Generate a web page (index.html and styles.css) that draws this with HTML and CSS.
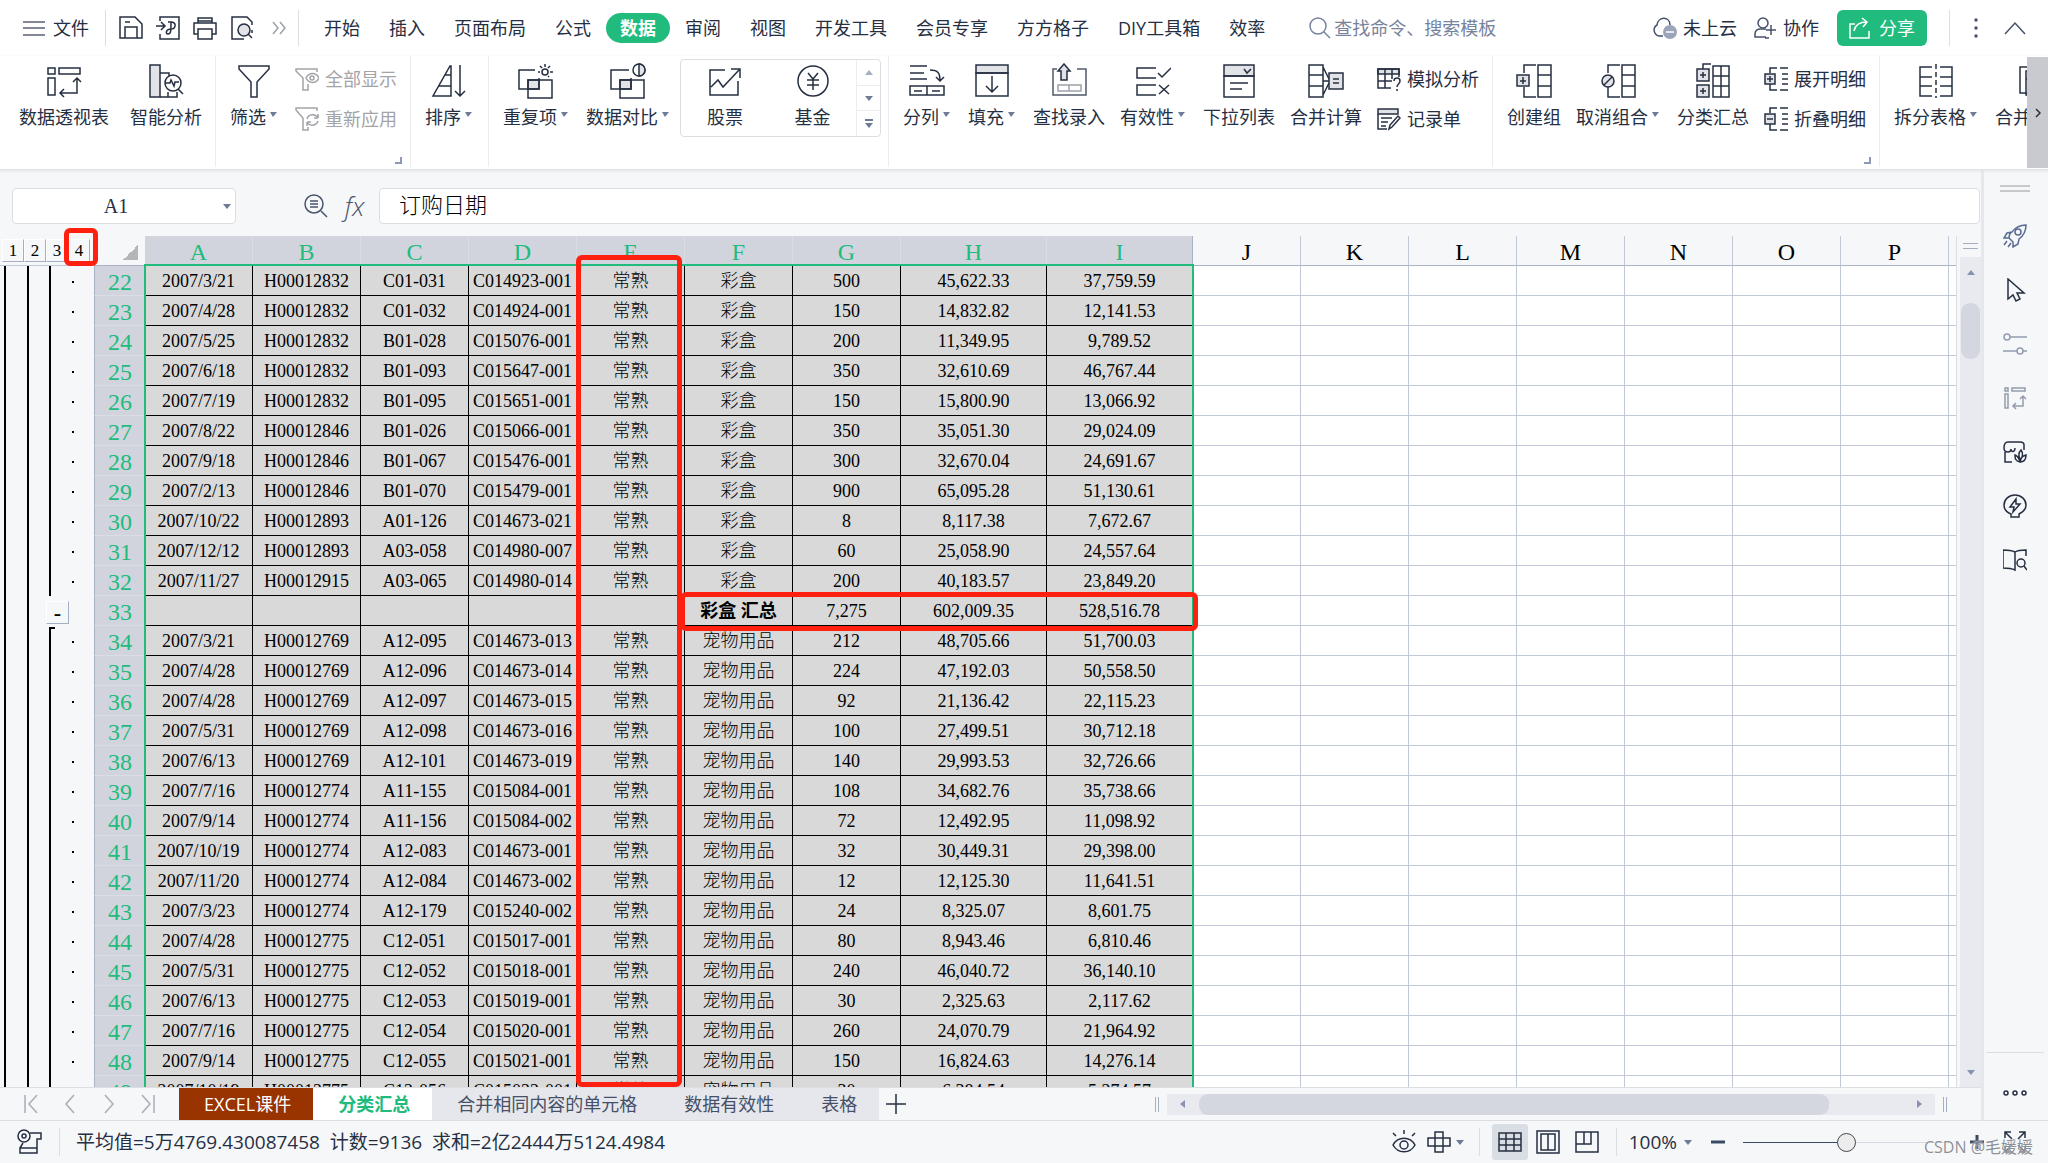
FILE: index.html
```html
<!DOCTYPE html>
<html lang="zh-CN">
<head>
<meta charset="utf-8">
<title>分类汇总</title>
<link rel="stylesheet" href="styles.css">
</head>
<body>
<header class="menubar">
  <button class="file-btn"><svg width="22" height="20" viewBox="0 0 22 20"><path d="M0 4h22M0 10h22M0 17h22"/></svg>文件</button>
  <i class="sep"></i>
  <div class="quick">
    <button aria-label="保存"><svg width="24" height="24" viewBox="0 0 24 24"><path d="M1 1h15l7 7v14H1zM6 22V11h12v11M6 6h5"/></svg></button>
    <button aria-label="输出为PDF"><svg width="24" height="24" viewBox="0 0 24 24"><path d="M4 5V1h19v22H4v-5M0 10h8M5 6l4 4-4 4M12 6h3c6 0 5 7 0 7-5 0-6 5-3 5 3 0 3-3 3-12"/></svg></button>
    <button aria-label="打印"><svg width="24" height="24" viewBox="0 0 24 24"><path d="M5 7V2h14v5M5 18H1V7h22v11h-4M5 13h14v10H5zM5 5h14"/></svg></button>
    <button aria-label="打印预览"><svg width="24" height="24" viewBox="0 0 24 24"><path d="M14 23H2V1h15l5 5v3M22 14v3"/><circle class="fill" cx="14" cy="14" r="6"/><path d="M18 18l4 4"/></svg></button>
    <button class="more" aria-label="更多"><svg width="14" height="14" viewBox="0 0 14 14"><path d="M1 1l5 6-5 6M8 1l5 6-5 6"/></svg></button>
  </div>
  <i class="sep"></i>
  <nav class="tabs">
    <button>开始</button><button>插入</button><button>页面布局</button><button>公式</button><button class="active">数据</button><button>审阅</button><button>视图</button><button>开发工具</button><button>会员专享</button><button>方方格子</button><button>DIY工具箱</button><button>效率</button>
  </nav>
  <label class="search"><svg width="22" height="22" viewBox="0 0 22 22"><circle cx="9" cy="9" r="8"/><path d="M15 15l6 6"/></svg><input type="text" aria-label="搜索" placeholder="查找命令、搜索模板"></label>
  <div class="account">
    <button class="cloud"><svg width="25" height="24" viewBox="0 0 25 24"><path d="M11 20H7a6 6 0 0 1-2-11C6 0 18 0 18 9"/><circle cx="18" cy="16" r="7" style="fill:#9aa5bb;stroke:none"/><path d="M14 16h8" style="stroke:#fff"/></svg>未上云</button>
    <button class="coop"><svg width="22" height="22" viewBox="0 0 22 22"><circle cx="9" cy="6" r="5"/><path d="M12 20H1v-3c0-4 3-5 6-5h5M17 8v10M12 13h10M15 21h-4"/></svg>协作</button>
    <button class="share"><svg width="22" height="22" viewBox="0 0 22 22"><path d="M6 7H1v14h19v-7M5 14C6 8 10 5 18 5M13 1l5 4-4 5"/></svg>分享</button>
    <i class="sep"></i>
    <button class="dots" aria-label="更多选项"><svg width="4" height="20" viewBox="0 0 4 20"><circle cx="2" cy="2" r="1"/><circle cx="2" cy="10" r="1"/><circle cx="2" cy="18" r="1"/></svg></button>
    <button aria-label="收起功能区"><svg width="22" height="14" viewBox="0 0 22 14"><path d="M1 13L11 2l10 11"/></svg></button>
  </div>
</header>

<section class="ribbon">
  <div class="group first">
    <button class="big"><svg viewBox="0 0 36 36"><path d="M2 5h7v6H2zM13 5h21v6H13zM2 15h7v17H2zM31 15v15H14M27 19l4-4 4 4M18 26l-4 4 4 4"/></svg><span>数据透视表</span></button>
    <button class="big"><svg viewBox="0 0 36 36"><path class="fill" d="M2 2h10v32H2z"/><path d="M12 10h9v3M12 34h17v-5M20 34v-5"/><circle cx="25" cy="20" r="8"/><path d="M30 26l5 5M17 20h5l1-3 3 6 1-4h4"/></svg><span>智能分析</span></button>
  </div>
  <div class="group">
    <button class="big drop"><svg viewBox="0 0 36 36"><path d="M3 3h30v3L21 19v15h-6V19L3 6z"/></svg><span>筛选</span></button>
    <div class="stack">
      <button class="small" disabled><svg viewBox="0 0 24 24"><path d="M22 5V2H1v2l7 7v12h5v-6M11 11c3-6 10-6 13 0-3 6-10 6-13 0z"/><circle cx="17" cy="11" r="2"/></svg>全部显示</button>
      <button class="small" disabled><svg viewBox="0 0 24 24"><path d="M22 4V1H1v2l7 8v12h5v-3M12 12a6 6 0 0 1 11-1v-4M23 11h-4M23 14a6 6 0 0 1-11 1v4M12 15h4"/></svg>重新应用</button>
    </div>
    <i class="corner"></i>
  </div>
  <div class="group">
    <button class="big drop"><svg viewBox="0 0 36 36"><path d="M20 3v30H2L19 3zM14 12h6M8 23h12M29 2v31M24 28l5 5 5-5"/></svg><span>排序</span></button>
  </div>
  <div class="group tight">
    <button class="big drop"><svg viewBox="0 0 36 36"><path class="fill" d="M10 17h11v9H10z"/><path d="M17 7H1v19h20V15M10 17h24v18H10zM27 1v3M20 9h2M32 9h3M22 3l2 2M32 3l-2 2M31 14l-1-1"/><circle cx="27" cy="9" r="3"/></svg><span>重复项</span></button>
    <button class="big drop"><svg viewBox="0 0 36 36"><path class="fill" d="M10 17h11v9H10z"/><path d="M19 7H1v19h20V15M10 17h24v18H10z"/><circle cx="29" cy="7" r="6"/><path class="fill" d="M29 1a6 6 0 0 1 0 12z"/></svg><span>数据对比</span></button>
    <div class="gallery">
      <button class="big"><svg viewBox="0 0 36 36"><path d="M18 7H3v25h28V18M4 24l7-7 5 7L32 7M24 6h9v9"/></svg><span>股票</span></button>
      <button class="big"><svg viewBox="0 0 36 36"><circle cx="18" cy="18" r="15"/><path d="M13 10l5 6 5-6M12 17h12M12 22h12M18 17v10"/></svg><span>基金</span></button>
      <div class="spin"><button class="up" aria-label="上一行"></button><button class="down" aria-label="下一行"></button><button class="all" aria-label="全部"></button></div>
    </div>
  </div>
  <div class="group">
    <button class="big drop"><svg viewBox="0 0 36 36"><path d="M1 3h17M1 10h14M1 16h17M21 7c8 0 10 3 10 11M27 14l4 4 4-4M1 23h34v9H1zM18 23v9M5 28h8M23 28h8"/></svg><span>分列</span></button>
    <button class="big drop"><svg viewBox="0 0 36 36"><path class="fill" d="M2 2h32v8H2z"/><path d="M2 10h32v23H2zM18 13v16M12 23l6 6 6-6"/></svg><span>填充</span></button>
    <button class="big"><svg viewBox="0 0 36 36"><g opacity=".8"><path d="M6 6H2v26h33V6h-9"/></g><g opacity=".45"><path d="M7 22h23v6H7zM18 22v6"/></g><path class="fill" d="M10 17V8H7l6-7 6 7h-3v9z"/></svg><span>查找录入</span></button>
    <button class="big drop"><svg viewBox="0 0 36 36"><path d="M21 5H2v10h19M21 22H2v10h19M23 10l4 4 9-9M24 22l10 9M34 22l-10 9"/></svg><span>有效性</span></button>
    <button class="big"><svg viewBox="0 0 36 36"><path class="fill" d="M3 2h30v11H3z"/><path d="M3 13h30v21H3zM23 6l3 4 4-4M9 20h18M9 26h12"/></svg><span>下拉列表</span></button>
    <button class="big"><svg viewBox="0 0 36 36"><path d="M1 2h14v32H1zM1 12h14M1 23h14M15 4l6 12M15 18h6M15 32l6-12"/><path class="fill" d="M21 10h14v16H21z"/><path d="M25 16h6M25 20h6"/></svg><span>合并计算</span></button>
    <div class="stack">
      <button class="small"><svg viewBox="0 0 24 24"><path class="fill" d="M1 2h21v5H1z"/><path d="M22 10V2H1v19h13M1 14h14M8 2v19M15 2v10M17 14c0-4 6-4 6 0 0 3-3 3-3 6M20 22v2"/></svg>模拟分析</button>
      <button class="small"><svg viewBox="0 0 24 24"><path class="fill" d="M1 2h20v5H1z"/><path d="M10 22H1V7M4 11h11M4 15h7M4 19h5M12 22l1-4 8-9 2 2-8 9z"/></svg>记录单</button>
    </div>
  </div>
  <div class="group">
    <button class="big"><svg viewBox="0 0 36 36"><path d="M20 2H8v8M8 24v10h12M22 2h13v32H22zM22 12h13M22 23h13"/><path class="fill" d="M1 12h12v11H1z"/><path d="M7 14v7M4 18h6"/></svg><span>创建组</span></button>
    <button class="big drop"><svg viewBox="0 0 36 36"><path d="M20 2H8v8M8 24v10h12M22 2h13v32H22zM22 12h13M22 23h13"/><circle class="fill" cx="8" cy="18" r="6"/><path d="M4 22l8-8"/></svg><span>取消组合</span></button>
    <button class="big"><svg viewBox="0 0 36 36"><path d="M8 6V1h8M18 3h16v31H18zM18 13h16M18 23h16M26 3v31"/><path class="fill" d="M2 6h12v12H2zM2 22h12v12H2z"/><path d="M8 9v6M5 12h6M8 25v6M5 28h6"/></svg><span>分类汇总</span></button>
    <div class="stack">
      <button class="small"><svg viewBox="0 0 24 24"><path d="M13 1H6v5M6 17v6h7M16 1h8M18 7h6M18 12h6M18 17h6M16 23h8"/><path class="fill" d="M1 7h10v10H1z"/><path d="M6 9v6M3 12h6"/></svg>展开明细</button>
      <button class="small"><svg viewBox="0 0 24 24"><path d="M13 1H6v5M6 17v6h7M16 1h8M18 7h6M18 12h6M18 17h6M16 23h8"/><path class="fill" d="M1 7h10v10H1z"/><path d="M3 12h6"/></svg>折叠明细</button>
    </div>
    <i class="corner"></i>
  </div>
  <div class="group last">
    <button class="big drop"><svg viewBox="0 0 36 36"><path d="M14 4H2v29h12M22 4h12v29H22M2 14h12M2 23h12M22 14h12M22 23h12"/><path d="M18 1v34" stroke-dasharray="5 3"/></svg><span>拆分表格</span></button>
    <button class="big drop"><svg viewBox="0 0 36 36"><path d="M9 4H1v26h7M7 8h22v24H7zM7 16h22M18 8v24"/></svg><span>合并表格</span></button>
  </div>
  <button class="ribbon-next" aria-label="向右滚动"><svg width="6" height="12" viewBox="0 0 6 12"><path d="M1 2l4 4-4 4"/></svg></button>
</section>

<div class="body">
  <main class="sheet">
    <div class="formula-row">
      <div class="namebox"><input type="text" aria-label="名称框" value="A1"><button aria-label="选择名称"></button></div>
      <div class="fx">
        <button aria-label="浏览公式"><svg width="26" height="26" viewBox="0 0 26 26"><circle cx="11" cy="11" r="9"/><path d="M18 18l6 6M7 8h8M7 11h8M7 14h8"/></svg></button>
        <button class="fx-btn">fx</button>
      </div>
      <input class="formula" type="text" aria-label="编辑栏" value="订购日期">
    </div>
    <div class="work">
      <div class="grid">
        <div class="outline">
          <div class="levels"><button>1</button><button>2</button><button>3</button><button>4</button></div>
          <div class="marks" id="marks"></div>
        </div>
        <table class="cells">
          <colgroup><col class="c-head"><col span="7"><col class="c-wide" span="2"><col span="12"></colgroup>
          <thead><tr id="letters"></tr></thead>
          <tbody id="rows"></tbody>
        </table>
        <div class="selection"></div>
      </div>
      <div class="vscroll">
        <i class="split"></i>
        <div class="track"><button class="up" aria-label="向上"></button><i class="thumb"></i><button class="down" aria-label="向下"></button></div>
      </div>
      <div class="note note-level"></div>
      <div class="note note-column"></div>
      <div class="note note-total"></div>
    </div>
    <div class="sheetbar">
      <div class="sheetnav">
        <button aria-label="第一个"><svg width="14" height="20" viewBox="0 0 14 20"><path d="M1 1v18M13 1L5 10l8 9"/></svg></button>
        <button aria-label="上一个"><svg width="14" height="20" viewBox="0 0 14 20"><path d="M11 1l-8 9 8 9"/></svg></button>
        <button aria-label="下一个"><svg width="14" height="20" viewBox="0 0 14 20"><path d="M3 1l8 9-8 9"/></svg></button>
        <button aria-label="最后一个"><svg width="14" height="20" viewBox="0 0 14 20"><path d="M13 1v18M1 1l8 9-8 9"/></svg></button>
      </div>
      <div class="sheettabs">
        <button class="brown">EXCEL课件</button><button class="current">分类汇总</button><button>合并相同内容的单元格</button><button>数据有效性</button><button>表格</button>
      </div>
      <button class="add" aria-label="新建工作表"><svg width="20" height="20" viewBox="0 0 20 20"><path d="M10 0v20M0 10h20"/></svg></button>
      <div class="hscroll">
        <i class="bars"></i>
        <div class="track"><button class="left" aria-label="向左"></button><i class="thumb"></i><button class="right" aria-label="向右"></button></div>
        <i class="bars"></i>
      </div>
    </div>
  </main>
  <aside class="side">
    <i class="grip"></i>
    <button aria-label="推荐" class="blue"><svg viewBox="0 0 24 24"><path d="M23 1c-7 0-11 3-14 7l-5 1-3 5 5 0 4 4v5l5-3 1-5c4-3 7-7 7-14zM6 14c0-3 1-5 3-6M4 17l-3 4M8 19l-3 4"/><circle cx="15" cy="8" r="3"/></svg></button>
    <button aria-label="选择"><svg viewBox="0 0 24 24"><path d="M5 1v20l5-4 3 6 4-2-3-6h7z"/></svg></button>
    <button aria-label="属性" class="dim"><svg viewBox="0 0 24 24"><circle cx="4" cy="5" r="3"/><path d="M7 5h17M0 19h14M20 19h4"/><circle cx="17" cy="19" r="3"/></svg></button>
    <button aria-label="数据透视表" class="dim"><svg viewBox="0 0 24 24"><path d="M2 2h3v3H2zM9 2h13v3H9zM2 8h3v14H2zM20 10v10h-9M17 13l3-3 3 3M13 17l-3 3 3 3"/></svg></button>
    <button aria-label="稻壳资源"><svg viewBox="0 0 24 24"><path d="M21 10V5c0-2-2-3-4-3H5C2 2 1 4 1 8c0 3 2 4 4 4s3-1 3-3c0 4 4 3 4-1M2 12v10h7M17 22c-5-1-5-4-5-7 3 1 4 3 5 7zM17 19c-2-4-1-7 1-9 2 3 2 6 0 9zM17 22c1-5 3-6 6-7 0 4-2 7-6 7z"/></svg></button>
    <button aria-label="智能助手"><svg viewBox="0 0 24 24"><path d="M8 20c-5-2-7-5-7-9a11 10 0 0 1 22 0c0 4-3 7-7 9v3H8zM13 5l-6 8h4l-1 5 7-8h-4z"/></svg></button>
    <button aria-label="学习中心"><svg viewBox="0 0 24 24"><path d="M23 8V2c-4 0-8 0-11 2C8 2 4 2 0 2v18c4 0 8 0 12 2V4"/><circle cx="18" cy="15" r="4"/><path d="M21 18l3 4"/></svg></button>
    <button class="side-more" aria-label="更多"><svg viewBox="0 0 24 24"><circle cx="3" cy="12" r="2"/><circle cx="12" cy="12" r="2"/><circle cx="21" cy="12" r="2"/></svg></button>
  </aside>
</div>

<footer class="status">
  <button aria-label="录制宏"><svg width="26" height="26" viewBox="0 0 26 26"><circle cx="7" cy="7" r="6"/><circle cx="7" cy="7" r="2"/><path d="M13 4h11v6h-4v14H3v-5h17M3 19l3-5"/></svg></button>
  <i class="sep"></i>
  <output>平均值=5万4769.430087458&nbsp; 计数=9136&nbsp; 求和=2亿2444万5124.4984</output>
  <div class="views">
    <button aria-label="护眼模式"><svg width="24" height="24" viewBox="0 0 24 24"><path d="M1 15c5-9 17-9 22 0-5 9-17 9-22 0zM12 0v4M1 3l3 3M23 3l-3 3"/><circle cx="12" cy="15" r="4"/></svg></button>
    <button class="cross" aria-label="阅读模式"><svg width="24" height="24" viewBox="0 0 24 24"><path d="M8 2h8v20H8zM1 8h22v8H1z"/></svg><i class="caret"></i></button>
    <i class="sep"></i>
    <button class="on" aria-label="普通视图"><svg width="24" height="24" viewBox="0 0 24 24"><path d="M1 3h22v18H1zM1 9h22M1 15h22M8 3v18M16 3v18"/></svg></button>
    <button aria-label="分页预览"><svg width="24" height="24" viewBox="0 0 24 24"><path d="M1 1h22v22H1zM5 4h14v16H5zM12 4v16"/></svg></button>
    <button aria-label="页面布局"><svg width="24" height="24" viewBox="0 0 24 24"><path d="M1 2h22v20H1zM1 14h15V2M9 2v12"/></svg></button>
    <i class="sep"></i>
    <button class="percent">100%<i class="caret"></i></button>
    <button class="minus" aria-label="缩小"><svg width="14" height="14" viewBox="0 0 14 14"><path d="M0 7h14"/></svg></button>
    <input type="range" aria-label="显示比例" min="0" max="100" value="50">
    <button class="plus" aria-label="放大"><svg width="14" height="14" viewBox="0 0 14 14"><path d="M0 7h14M7 0v14"/></svg></button>
    <button aria-label="全屏"><svg width="22" height="22" viewBox="0 0 22 22"><path d="M1 7V1h6M15 1h6v6M21 15v6h-6M7 21H1v-6M1 1l7 7M21 1l-7 7M21 21l-7-7M1 21l7-7"/></svg></button>
  </div>
  <span class="watermark">CSDN @毛媛媛</span>
</footer>
<script src="sheet.js"></script>
</body>
</html>
```
FILE: styles.css
```css
* { box-sizing: border-box; }
:root {
  --ink: #262f42;
  --line: #dcdee3;
  --pane: #f6f7f9;
  --strip: #e6e7ed;
  --green: #21bb7e;
  --caret: #6d7b96;
  --grid: #c1c8d8;
  --mark: #ff2010;
  --ui: "Open Sans", "Noto Sans CJK SC", sans-serif;
  --cell: "Liberation Serif", "Noto Sans CJK SC", serif;
}
body {
  margin: 0;
  height: 100vh;
  display: flex;
  flex-direction: column;
  overflow: hidden;
  background: var(--pane);
  color: var(--ink);
  font: 18px/24px var(--ui);
}
button, input {
  font: inherit;
  color: inherit;
  border: 0;
  padding: 0;
  background: none;
  white-space: nowrap;
}
button { display: flex; align-items: center; justify-content: center; flex: none; }
svg { fill: none; stroke: currentColor; stroke-width: 1.5; flex: none; }
svg .fill { fill: #e1e3e7; }
.sep { width: 1px; background: var(--line); flex: none; }

/* Menu bar */
.menubar { height: 56px; flex: none; display: flex; align-items: center; background: #fff; padding: 0 22px 0 23px; }
.menubar .sep { height: 36px; }
.file-btn { gap: 8px; margin-right: 16px; }
.file-btn svg { stroke: #5a6273; }
.quick { display: flex; align-items: center; gap: 13px; margin: 0 12px 0 13px; }
.quick .more { margin-left: 5px; color: #9aa0ab; }
.tabs { display: flex; gap: 1px; margin-left: 11px; }
.tabs button { height: 30px; padding: 0 14px; border-radius: 15px; }
.tabs .active { background: var(--green); color: #fff; font-weight: 700; }
.search { display: flex; align-items: center; gap: 3px; margin-left: 30px; color: #77839c; }
.search input { width: 170px; }
.search input::placeholder { color: #77839c; opacity: 1; }
.account { margin-left: auto; display: flex; align-items: center; }
.account svg { color: #46516a; }
.cloud { gap: 6px; }
.coop { gap: 7px; margin: 0 18px 0 17px; }
.share { gap: 8px; width: 90px; height: 36px; border-radius: 6px; background: var(--green); color: #fff; }
.share svg { color: #fff; }
.account .sep { margin: 0 24px 0 22px; }
.dots { margin-right: 26px; }

/* Ribbon */
.ribbon { position: relative; z-index: 1; height: 114px; flex: none; display: flex; overflow: hidden; background: #fff; border-bottom: 1px solid #e2e4e8; box-shadow: 0 1px 3px #dfe1e5; }
.group { position: relative; display: flex; align-items: flex-start; gap: 15px; height: 111px; padding: 0 13px 0 14px; border-right: 1px solid #ebecef; flex: none; }
.group.first { gap: 21px; padding-left: 19px; }
.group.tight { padding-right: 7px; }
.group.last { border: 0; }
.big { flex-direction: column; gap: 6px; padding-top: 7px; }
.big svg { width: 36px; height: 36px; }
.drop { margin-right: 3px; }
.drop span { display: flex; align-items: center; gap: 4px; }
.drop span::after, .caret, .namebox button::after {
  content: "";
  border: 4px solid transparent;
  border-top: 5px solid var(--caret);
  border-bottom: 0;
}
.drop span::after { margin: 0 0 6px; border-left-width: 3px; }
.stack { display: flex; flex-direction: column; padding-top: 3px; }
.small { height: 40px; gap: 6px; justify-content: flex-start; }
.small svg { width: 24px; height: 24px; }
.small:disabled { color: #a2a4a8; }
.small:disabled svg { stroke: #a2a4a8; }
.corner { position: absolute; right: 8px; bottom: 3px; width: 7px; height: 7px; border: solid #8c9ab5; border-width: 0 2px 2px 0; }
.gallery { display: flex; height: 78px; margin: 3px 0 0 -7px; border: 1px solid var(--line); border-radius: 4px; }
.gallery .big { width: 88px; padding-top: 3px; justify-content: flex-start; }
.gallery .big + .big { width: 87px; }
.spin { display: flex; flex-direction: column; width: 24px; border-left: 1px solid #ebecef; }
.spin button { flex: 1; flex-direction: column; gap: 2px; }
.spin button + button { border-top: 1px solid #ebecef; }
.up::after, .down::after, .all::after, .left::after, .right::after { content: ""; border: 4px solid transparent; }
.up::after { border-bottom: 5px solid #a4afc3; border-top: 0; }
.down::after, .all::after { border-top: 5px solid var(--caret); border-bottom: 0; }
.all::before { content: ""; width: 8px; height: 2px; background: var(--caret); }
.left::after { border-right: 5px solid #8593b0; border-left: 0; }
.right::after { border-left: 5px solid #8593b0; border-right: 0; }
.ribbon-next { position: absolute; right: 0; top: 1px; width: 21px; height: 111px; background: #c9cad0; }

/* Sheet pane */
.body { flex: 1; min-height: 0; display: flex; }
.sheet { flex: 1; min-width: 0; display: flex; flex-direction: column; }
.formula-row { display: flex; align-items: center; padding: 18px 1px 12px 12px; flex: none; }
.namebox { display: flex; width: 224px; height: 36px; background: #fff; border: 1px solid var(--line); border-radius: 4px; }
.namebox input { flex: 1; min-width: 0; text-align: center; font: 20px/24px var(--cell); }
.namebox button { width: 16px; }
.fx { display: flex; align-items: center; gap: 13px; margin: 0 12px 0 67px; color: #4a566d; }
.fx-btn { width: 25px; font: italic 300 26px/30px var(--ui); }
.formula { flex: 1; min-width: 0; height: 36px; padding: 0 19px 6px; background: #fff; border: 1px solid var(--line); border-radius: 4px; font: 300 22px/28px var(--cell); color: #000; }
.work { position: relative; flex: 1; min-height: 0; display: flex; }
.grid { position: relative; flex: 1; min-width: 0; display: flex; align-items: flex-start; overflow: hidden; border-right: 1px solid var(--line); }

/* Outline gutter */
.outline { width: 94px; flex: none; }
.levels { display: flex; height: 30px; padding: 3px 0 3px 2px; border-bottom: 1px solid var(--grid); }
.levels button { width: 22px; font: 17px/22px var(--cell); color: #000; border: 1px solid #fff; border-right-color: #a4afc3; border-bottom-color: #a4afc3; }
.mark { display: grid; grid-template-columns: 23px 22px 23px 10px; height: 30px; padding-left: 4px; }
.bar { border-left: 2px solid #000; }
.bar.start { height: 29px; margin-top: 1px; background: linear-gradient(#000, #000) no-repeat 0 0 / 4px 2px; }
.dot { width: 2px; height: 2px; margin-top: 15px; background: #000; }
.fold { width: 23px; height: 23px; margin: 5px 0 0 -3px; font: 700 22px/20px var(--cell); color: #000; border: 1px solid #fff; border-right-color: #a4afc3; border-bottom-color: #a4afc3; }

/* Cells */
.cells { border-collapse: separate; border-spacing: 0; table-layout: fixed; width: 2258px; flex: none; font: 18px/24px var(--cell); color: #000; text-align: center; }
.cells col { width: 108px; }
.cells .c-head { width: 51px; }
.cells .c-wide { width: 146px; }
.cells th, .cells td { height: 30px; padding: 0; overflow: hidden; white-space: nowrap; font-weight: 300; }
.cells th { font-size: 24px; line-height: 24px; }
.cells thead th { padding-top: 3px; border-right: 1px solid var(--grid); border-bottom: 1px solid #a9b3c5; }
.cells thead th.sel { background: #d1d4dc; color: var(--green); border-right-color: #dadde4; }
.cells thead th.sel-end { border-right-color: #a9b3c5; }
.cells thead .all-cells { border-right: 0; background: linear-gradient(135deg, transparent 50%, #b4b5b8 50%) no-repeat 29px 9px / 15px 15px; }
.cells tbody th { background: #d1d4dc; color: var(--green); border-left: 1px solid #a9b3c5; border-bottom: 1px solid #dadde4; padding-top: 3px; }
.cells td { background: #fff; border-right: 1px solid var(--grid); border-bottom: 1px solid var(--grid); }
.cells td.sel { background: #d9d9d9; border-color: #000; }
.cells td.strong { font-weight: 700; }
.selection { position: absolute; left: 144px; top: 28px; width: 1050px; bottom: -4px; border: 2px solid var(--green); pointer-events: none; }

/* Red call-outs drawn over the sheet */
.note { position: absolute; border: 5px solid var(--mark); border-radius: 6px; pointer-events: none; }
.note-level { left: 64px; top: -8px; width: 34px; height: 38px; }
.note-column { left: 576px; top: 19px; width: 106px; height: 832px; }
.note-total { left: 680px; top: 356px; width: 518px; height: 39px; }

/* Scroll bars */
.vscroll { width: 24px; padding-left: 3px; flex: none; display: flex; flex-direction: column; }
.split { height: 6px; margin: 7px 3px 8px; border: solid #a4afc3; border-width: 1px 0; }
.vscroll .track { flex: 1; display: flex; flex-direction: column; background: #e9eaef; }
.vscroll .up { height: 30px; }
.vscroll .up::after { border-bottom-color: #8593b0; }
.vscroll .down { height: 30px; margin-top: auto; }
.vscroll .down::after { border-top-color: #8593b0; }
.vscroll .thumb { height: 56px; margin: 16px 1px 0; border-radius: 9px; background: #d4d7df; }
.sheetbar { height: 34px; flex: none; display: flex; align-items: center; border-top: 1px solid var(--line); border-bottom: 1px solid var(--line); }
.sheetnav { display: flex; width: 179px; padding-left: 24px; gap: 25px; color: #a9adb6; }
.sheettabs { display: flex; align-self: stretch; background: var(--strip); color: #465066; }
.sheettabs button { padding: 0 22px 0 25px; }
.sheettabs .brown { background: #993300; color: #fff; }
.sheettabs .current { background: #fff; color: var(--green); font-weight: 700; }
.add { margin: 0 auto 0 7px; }
.hscroll { display: flex; align-items: center; gap: 8px; width: 40%; margin-right: 34px; }
.bars { width: 4px; height: 15px; border: solid #a4afc3; border-width: 0 1px; }
.hscroll .track { flex: 1; display: flex; height: 21px; background: #e9eaef; }
.hscroll .left, .hscroll .right { width: 32px; }
.hscroll .thumb { width: 630px; margin-right: auto; border-radius: 9px; background: #d4d7df; }

/* Side panel */
.side { width: 67px; flex: none; display: flex; flex-direction: column; align-items: center; padding: 15px 2px 0 0; border-left: 3px solid var(--strip); border-bottom: 1px solid var(--line); }
.side .grip { width: 30px; height: 7px; margin-bottom: 17px; border: solid #c6c8cc; border-width: 2px 0; }
.side button { width: 58px; height: 54px; }
.side svg { width: 24px; height: 24px; }
.side .blue { color: #5a6b92; }
.side .dim { color: #939daf; }
.side .side-more { margin-top: auto; height: 68px; border-top: 1px solid var(--line); align-items: flex-start; padding-top: 28px; }

/* Status bar */
.status { position: relative; height: 42px; flex: none; display: flex; align-items: center; padding: 0 22px 0 17px; }
.status .sep { height: 28px; }
.status > .sep { margin: 0 16px; }
.status output { font-size: 19px; }
.views { margin-left: auto; display: flex; align-items: center; }
.views > button { margin-right: 11px; }
.caret { flex: none; }
.cross { gap: 5px; }
.views .cross { margin-right: 15px; }
.views .on { width: 36px; height: 36px; margin: 0 8px 0 12px; border-radius: 3px; background: #d9dee5; }
.views > button:nth-of-type(4) { margin-right: 15px; }
.views > button:nth-of-type(5) { margin-right: 17px; }
.views .percent { gap: 7px; margin: 0 19px 0 12px; font-size: 19px; }
.views .minus, .views .plus { margin: 0 18px 0 0; color: #3b4a63; }
.minus svg, .plus svg { stroke-width: 3; }
.views input { width: 206px; height: 20px; margin: 0 21px 0 0; appearance: none; background: linear-gradient(90deg, #3b4a63 50%, #d4d9e4 50%) no-repeat 0 10px / 100% 1px; }
.views input::-webkit-slider-thumb { appearance: none; width: 19px; height: 19px; border: 1px solid #44474d; border-radius: 50%; background: #ececec; }
.views > button:last-child { margin-right: 0; }
.views .plus { margin-right: 20px; }
.watermark { position: absolute; right: 15px; bottom: 4px; font-size: 16px; color: #8d9096; text-shadow: 0 0 2px #fff; }
```
FILE: sheet.js
```js
const firstRow = 22;
const data = `2007/3/21|H00012832|C01-031|C014923-001|常熟|彩盒|500|45,622.33|37,759.59
2007/4/28|H00012832|C01-032|C014924-001|常熟|彩盒|150|14,832.82|12,141.53
2007/5/25|H00012832|B01-028|C015076-001|常熟|彩盒|200|11,349.95|9,789.52
2007/6/18|H00012832|B01-093|C015647-001|常熟|彩盒|350|32,610.69|46,767.44
2007/7/19|H00012832|B01-095|C015651-001|常熟|彩盒|150|15,800.90|13,066.92
2007/8/22|H00012846|B01-026|C015066-001|常熟|彩盒|350|35,051.30|29,024.09
2007/9/18|H00012846|B01-067|C015476-001|常熟|彩盒|300|32,670.04|24,691.67
2007/2/13|H00012846|B01-070|C015479-001|常熟|彩盒|900|65,095.28|51,130.61
2007/10/22|H00012893|A01-126|C014673-021|常熟|彩盒|8|8,117.38|7,672.67
2007/12/12|H00012893|A03-058|C014980-007|常熟|彩盒|60|25,058.90|24,557.64
2007/11/27|H00012915|A03-065|C014980-014|常熟|彩盒|200|40,183.57|23,849.20
|||||彩盒 汇总|7,275|602,009.35|528,516.78
2007/3/21|H00012769|A12-095|C014673-013|常熟|宠物用品|212|48,705.66|51,700.03
2007/4/28|H00012769|A12-096|C014673-014|常熟|宠物用品|224|47,192.03|50,558.50
2007/4/28|H00012769|A12-097|C014673-015|常熟|宠物用品|92|21,136.42|22,115.23
2007/5/31|H00012769|A12-098|C014673-016|常熟|宠物用品|100|27,499.51|30,712.18
2007/6/13|H00012769|A12-101|C014673-019|常熟|宠物用品|140|29,993.53|32,726.66
2007/7/16|H00012774|A11-155|C015084-001|常熟|宠物用品|108|34,682.76|35,738.66
2007/9/14|H00012774|A11-156|C015084-002|常熟|宠物用品|72|12,492.95|11,098.92
2007/10/19|H00012774|A12-083|C014673-001|常熟|宠物用品|32|30,449.31|29,398.00
2007/11/20|H00012774|A12-084|C014673-002|常熟|宠物用品|12|12,125.30|11,641.51
2007/3/23|H00012774|A12-179|C015240-002|常熟|宠物用品|24|8,325.07|8,601.75
2007/4/28|H00012775|C12-051|C015017-001|常熟|宠物用品|80|8,943.46|6,810.46
2007/5/31|H00012775|C12-052|C015018-001|常熟|宠物用品|240|46,040.72|36,140.10
2007/6/13|H00012775|C12-053|C015019-001|常熟|宠物用品|30|2,325.63|2,117.62
2007/7/16|H00012775|C12-054|C015020-001|常熟|宠物用品|260|24,070.79|21,964.92
2007/9/14|H00012775|C12-055|C015021-001|常熟|宠物用品|150|16,824.63|14,276.14
2007/10/19|H00012775|C12-056|C015022-001|常熟|宠物用品|30|6,384.54|5,274.57`
  .split("\n").map(line => line.split("|"));

const letters = "ABCDEFGHIJKLMNOPQRSTU".split("");
const used = data[0].length;

document.getElementById("letters").innerHTML =
  '<th class="all-cells"></th>' +
  letters.map((l, i) => {
    const cls = i < used ? (i === used - 1 ? "sel sel-end" : "sel") : "";
    return `<th scope="col" class="${cls}">${l}</th>`;
  }).join("");

document.getElementById("rows").innerHTML = data.map((cells, r) => {
  const total = cells[0] === "";
  return `<tr><th scope="row">${firstRow + r}</th>` + letters.map((_, c) => {
    if (c >= used) return "<td></td>";
    return `<td class="sel${total && c === 5 ? " strong" : ""}">${cells[c]}</td>`;
  }).join("") + "</tr>";
}).join("");

const bar = '<i class="bar"></i>';
document.getElementById("marks").innerHTML = data.map((cells, r) => {
  const total = cells[0] === "";
  const starts = r > 0 && data[r - 1][0] === "";
  const third = total ? '<button class="fold">-</button>' : `<i class="bar${starts ? " start" : ""}"></i>`;
  return `<div class="mark">${bar}${bar}${third}${total ? "" : '<i class="dot"></i>'}</div>`;
}).join("");
```
